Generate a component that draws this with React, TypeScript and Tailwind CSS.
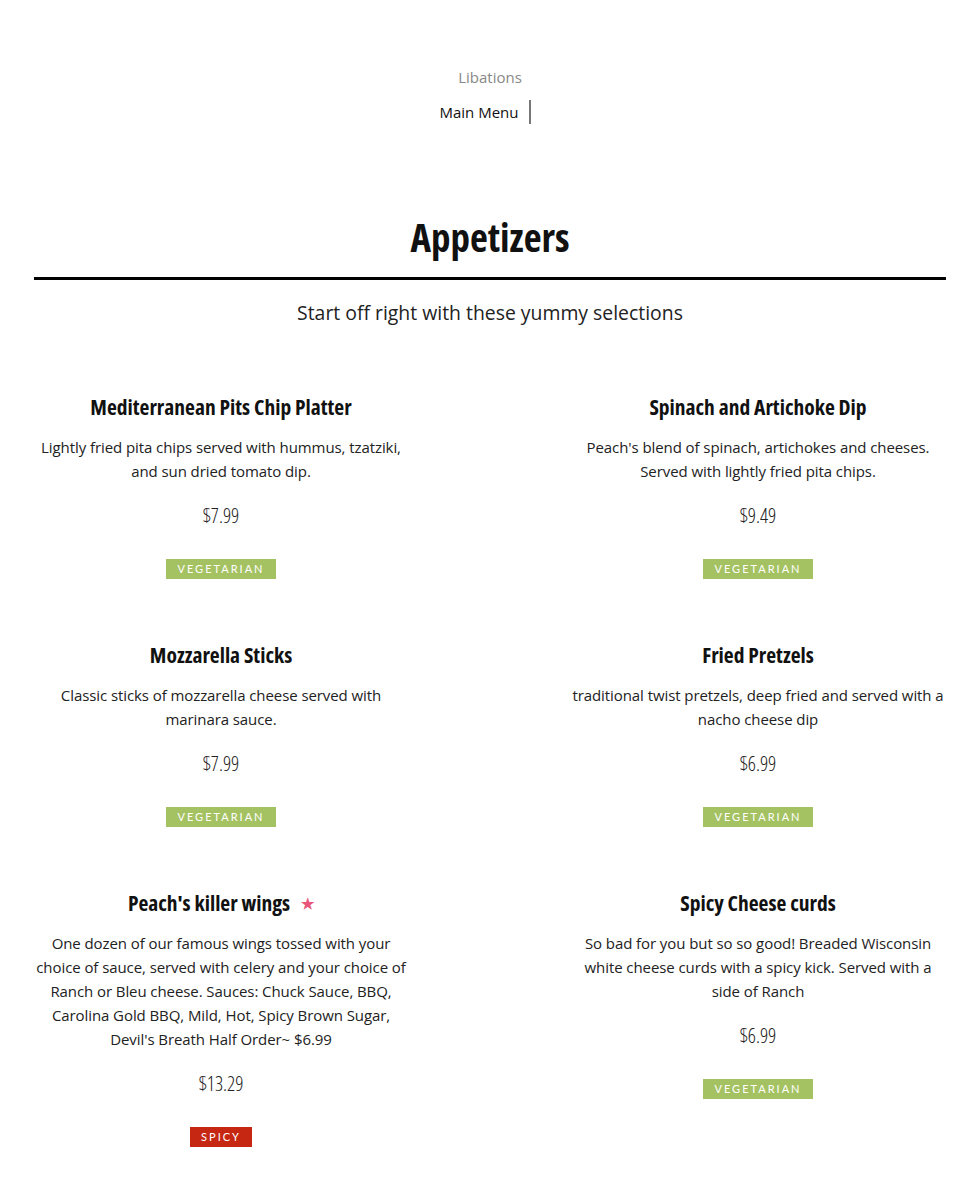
import React from "react";

type Item = {
  title: string;
  desc: string;
  price: string;
  tag: "veg" | "spicy";
  star?: boolean;
};

const items: Item[] = [
  {
    title: "Mediterranean Pits Chip Platter",
    desc: "Lightly fried pita chips served with hummus, tzatziki, and sun dried tomato dip.",
    price: "$7.99",
    tag: "veg",
  },
  {
    title: "Spinach and Artichoke Dip",
    desc: "Peach's blend of spinach, artichokes and cheeses. Served with lightly fried pita chips.",
    price: "$9.49",
    tag: "veg",
  },
  {
    title: "Mozzarella Sticks",
    desc: "Classic sticks of mozzarella cheese served with marinara sauce.",
    price: "$7.99",
    tag: "veg",
  },
  {
    title: "Fried Pretzels",
    desc: "traditional twist pretzels, deep fried and served with a nacho cheese dip",
    price: "$6.99",
    tag: "veg",
  },
  {
    title: "Peach's killer wings",
    desc: "One dozen of our famous wings tossed with your choice of sauce, served with celery and your choice of Ranch or Bleu cheese. Sauces: Chuck Sauce, BBQ, Carolina Gold BBQ, Mild, Hot, Spicy Brown Sugar, Devil's Breath Half Order~ $6.99",
    price: "$13.29",
    tag: "spicy",
    star: true,
  },
  {
    title: "Spicy Cheese curds",
    desc: "So bad for you but so so good! Breaded Wisconsin white cheese curds with a spicy kick. Served with a side of Ranch",
    price: "$6.99",
    tag: "veg",
  },
];

function MenuItem({ item }: { item: Item }) {
  return (
    <div className="flex flex-col items-center text-center">
      <h3 className="flex items-center font-['Open_Sans'] [font-stretch:75%] font-bold text-[21.5px] leading-[28px] text-[#111]">
        {item.title}
        {item.star && (
          <span className="ml-[11px] text-[15px] text-[#e8577a] [font-stretch:100%]">★</span>
        )}
      </h3>
      <p className="mt-[14px] font-['Open_Sans'] text-[15px] tracking-[-0.08px] leading-[24px] text-[#222]">
        {item.desc}
      </p>
      <div className="mt-[19px] font-['Open_Sans'] [font-stretch:75%] font-light text-[20px] leading-[28px] text-[#222]">
        {item.price}
      </div>
      {item.tag === "veg" ? (
        <span className="mt-[29px] flex h-[20px] w-[110px] items-center justify-center bg-[#a5c263] font-['Lato'] text-[11px] tracking-[2px] text-white">
          VEGETARIAN
        </span>
      ) : (
        <span className="mt-[29px] flex h-[20px] w-[62px] items-center justify-center bg-[#c52713] font-['Lato'] text-[11px] tracking-[2px] text-white">
          SPICY
        </span>
      )}
    </div>
  );
}

export default function App() {
  return (
    <div className="bg-white pl-[34px] pr-[19px] pb-[39px] font-['Open_Sans',sans-serif]">
      <nav className="flex flex-col items-center pt-[66px]">
        <a className="block text-[15px] leading-[22px] text-[#888]">Libations</a>
        <div className="mt-[12px] mr-[10px] flex h-[24px] items-center">
          <span className="pr-[10px] text-[15px] leading-[22px] text-[#111]">Main Menu</span>
          <span className="h-[24px] w-[2px] bg-[#777]" />
        </div>
      </nav>

      <header className="mt-[89px] flex flex-col items-center">
        <h1 className="font-['Open_Sans'] [font-stretch:75%] font-bold text-[39px] leading-[48px] text-[#111]">
          Appetizers
        </h1>
        <div className="mt-[16px] h-[3px] w-full bg-black" />
        <p className="mt-[19px] text-[19.4px] leading-[28px] text-[#222]">
          Start off right with these yummy selections
        </p>
      </header>

      <section className="mt-[66px] grid grid-cols-[374px_376px] justify-between gap-y-[62px]">
        {items.map((it) => (
          <MenuItem key={it.title} item={it} />
        ))}
      </section>
    </div>
  );
}
